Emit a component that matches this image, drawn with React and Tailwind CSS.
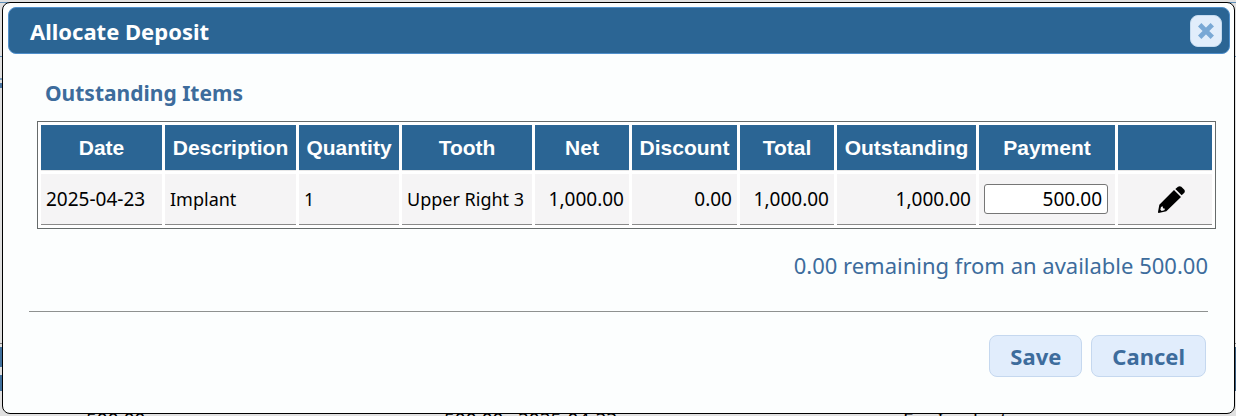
import { useState } from 'react'

const columns = [
  { label: 'Date', width: 'w-[121px]' },
  { label: 'Description', width: 'w-[131px]' },
  { label: 'Quantity', width: 'w-[100px]' },
  { label: 'Tooth', width: 'w-[130px]' },
  { label: 'Net', width: 'w-[94px]' },
  { label: 'Discount', width: 'w-[105px]' },
  { label: 'Total', width: 'w-[94px]' },
  { label: 'Outstanding', width: 'w-[139px]' },
  { label: 'Payment', width: 'w-[136px]' },
  { label: '', width: 'w-[94px]' },
]

const items = [
  {
    date: '2025-04-23',
    description: 'Implant',
    quantity: 1,
    tooth: 'Upper Right 3',
    net: '1,000.00',
    discount: '0.00',
    total: '1,000.00',
    outstanding: '1,000.00',
    payment: '500.00',
  },
]

function CloseIcon() {
  return (
    <svg viewBox="0 0 16 16" className="size-4" aria-hidden="true">
      <path d="M3.4 3.4 12.6 12.6M12.6 3.4 3.4 12.6" stroke="currentColor" strokeWidth="4.8" strokeLinecap="square" strokeLinejoin="round" />
    </svg>
  )
}

function PencilIcon() {
  return (
    <svg viewBox="0 0 81 81" className="size-[27px]" fill="currentColor" aria-hidden="true">
      <path d="M52 9 60 2Q65-1 70 2L79 11Q82 16 79 20L71 28Z" />
      <path fillRule="evenodd" d="M48 12 69 33 25 76 2 81Q0 81 0 78L4 56ZM9 63 7 71 11 75 19 73 21 68 15 67 14 61Z" />
    </svg>
  )
}

function TitleBar({ title }) {
  return (
    <header className="flex h-[47px] items-center justify-between rounded-lg border border-[#4f8fcb] bg-[#2b6594] pr-[7px] pl-[21px]">
      <h1 id="dialog-title" className="text-[22px] leading-6 font-bold text-white">{title}</h1>
      <button type="button" aria-label="Close" className="flex size-8 items-center justify-center rounded-lg border border-[#c5dbf0] bg-[#e1edfb] text-[#79a8d5]">
        <CloseIcon />
      </button>
    </header>
  )
}

function Cell({ children, numeric }) {
  return (
    <td className={numeric ? 'border-b border-[#8a8a8a] bg-[#f5f4f5] px-[5px] text-right text-[19px]' : 'border-b border-[#8a8a8a] bg-[#f5f4f5] px-[5px]'}>
      {children}
    </td>
  )
}

function ItemsTable() {
  const [payment, setPayment] = useState(items[0].payment)

  return (
    <table className="w-full table-fixed border-separate border-spacing-[3px] border border-[#666b6b] bg-white text-lg leading-6 whitespace-nowrap text-black">
      <thead>
        <tr className="h-[46px]">
          {columns.map((col) => (
            <th key={col.label} scope="col" className={`${col.width} border-b border-[#e8e8e8] bg-[#2b6594] font-['Liberation_Sans',sans-serif] text-[21px] font-bold text-white`}>
              {col.label}
            </th>
          ))}
        </tr>
      </thead>
      <tbody>
        {items.map((item) => (
          <tr key={item.date} className="h-[51px]">
            <td className="border-b border-[#8a8a8a] bg-[#f5f4f5] px-[5px] text-[19px]">{item.date}</td>
            <Cell>{item.description}</Cell>
            <Cell>{item.quantity}</Cell>
            <Cell>{item.tooth}</Cell>
            <Cell numeric>{item.net}</Cell>
            <Cell numeric>{item.discount}</Cell>
            <Cell numeric>{item.total}</Cell>
            <Cell numeric>{item.outstanding}</Cell>
            <Cell>
              <input
                aria-label="Payment"
                value={payment}
                onChange={(e) => setPayment(e.target.value)}
                className="block h-[30px] w-[124px] rounded-[3px] border border-[#767676] bg-white px-[5px] text-right text-[19px]"
              />
            </Cell>
            <Cell>
              <button type="button" aria-label="Edit payment" className="mx-auto block pl-3">
                <PencilIcon />
              </button>
            </Cell>
          </tr>
        ))}
      </tbody>
    </table>
  )
}

function DialogButton({ children }) {
  return (
    <button type="button" className="h-[42px] rounded-lg border border-[#c5d8ef] bg-[#e1edfc] px-5 text-[22px] leading-6 font-bold text-[#3d6c9c]">
      {children}
    </button>
  )
}

// Dimmed page that shows round the edges of the dialog
function Backdrop() {
  return (
    <div className="absolute inset-0 overflow-hidden bg-[#e0e0e0]">
      <div className="mt-0.5 h-px bg-[#5f8fb8]" />
      <div className="mt-[53px] h-px bg-[#5f8fb8]" />
      <div className="mt-[21px] h-0.5 w-1 bg-[#7f9dbb]" />
      <div className="mt-[3px] h-[5px] w-1 bg-[#4a76a2]" />
      <div className="mt-[255px] h-px bg-[#777777]" />
      <div className="mt-[3px] flex h-11 justify-between">
        <div className="flex w-1 flex-col justify-between">
          <div className="h-5 bg-[#41719d]" />
          <div className="h-4 bg-[#41719d]" />
        </div>
        <div className="w-1 bg-[#3b5f80]" />
      </div>
      <div className="mt-[17px] flex pl-[86px] text-[19px] leading-6 whitespace-nowrap text-black">
        <span className="w-[358px]">500.00</span>
        <span className="w-[74px]">500.00</span>
        <span className="w-[385px]">2025-04-23</span>
        <span>For Implant</span>
      </div>
    </div>
  )
}

export default function App() {
  return (
    <div className="relative h-screen overflow-hidden pt-0.5 pr-px pl-0.5 font-['Noto_Sans',sans-serif]">
      <Backdrop />
      <main role="dialog" aria-labelledby="dialog-title" className="relative rounded-lg border border-black bg-[#fcfefe] pt-1 pr-1 pb-9 pl-[5px]">
        <TitleBar title="Allocate Deposit" />
        <section className="pt-[27px] pr-[14px] pl-[29px]">
          <h2 className="pl-2 text-[21px] leading-6 font-bold text-[#3d6c9c]">Outstanding Items</h2>
          <div className="mt-4">
            <ItemsTable />
          </div>
        </section>
        <p className="mt-6 pr-[22px] text-right text-[22px] leading-6 text-[#3d6c9c]">
          0.00 remaining from an available 500.00
        </p>
        <hr className="mt-[34px] mr-[22px] ml-[21px] border-[#8e9190]" />
        <footer className="mt-[23px] flex justify-end gap-[9px] pr-6">
          <DialogButton>Save</DialogButton>
          <DialogButton>Cancel</DialogButton>
        </footer>
      </main>
    </div>
  )
}
